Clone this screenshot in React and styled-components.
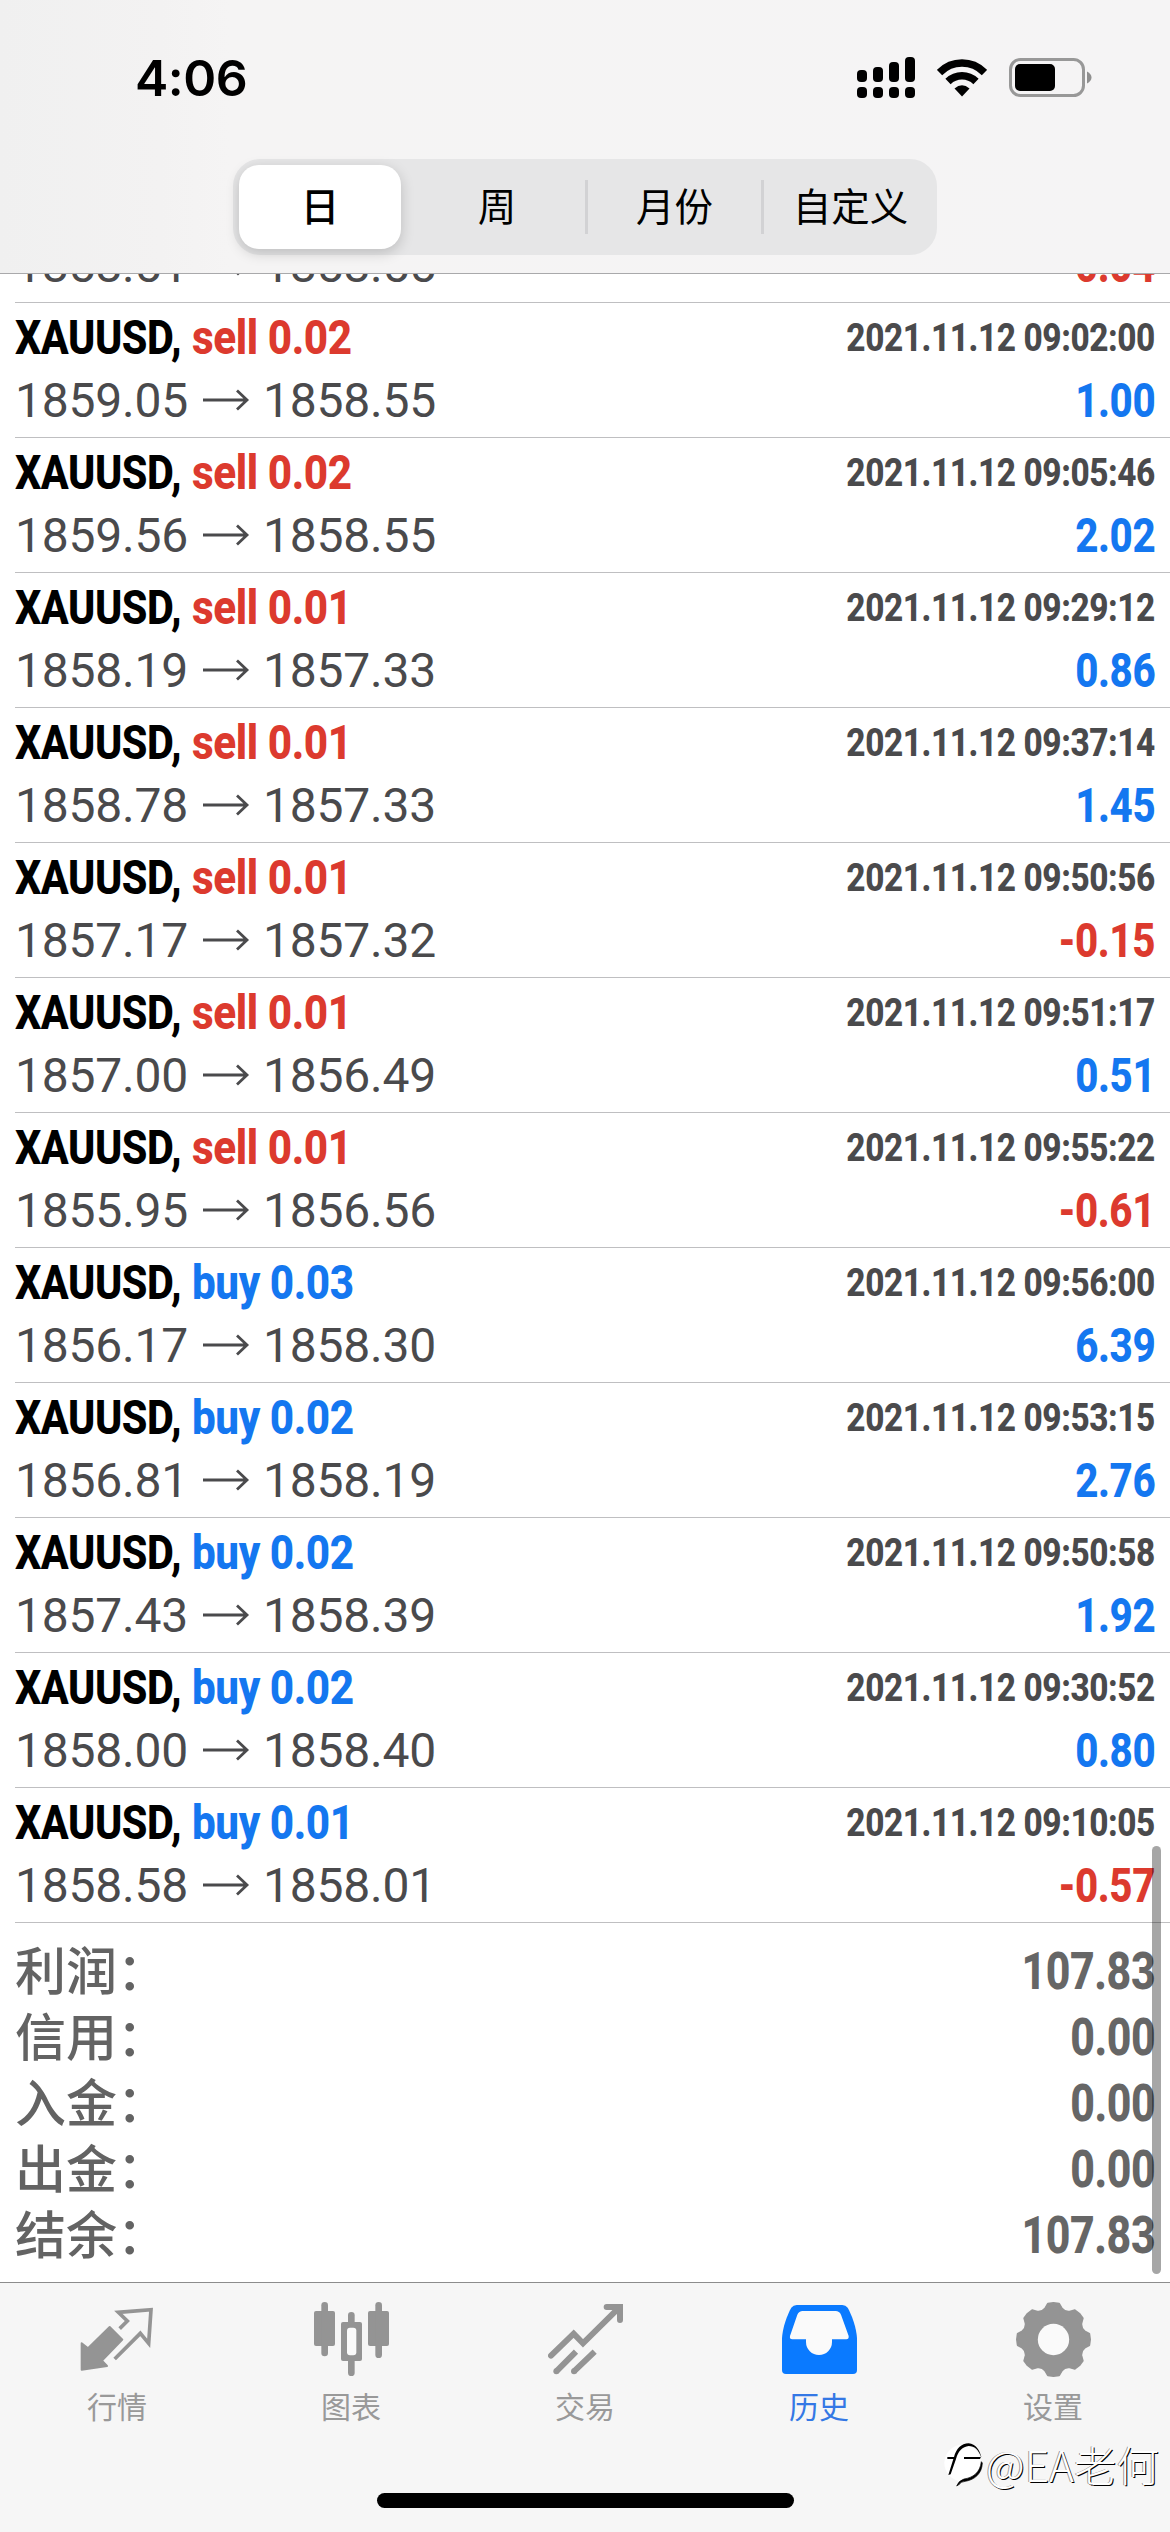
import React from 'react';
import styled, { createGlobalStyle } from 'styled-components';

const GlobalStyle = createGlobalStyle`
  * { box-sizing: border-box; }
  body {
    margin: 0;
    background: #fff;
    font-family: Roboto, "Noto Sans CJK SC", sans-serif;
  }
`;

const Screen = styled.div`
  width: 1170px;
  height: 2532px;
  display: flex;
  flex-direction: column;
  overflow: hidden;
  background: #fff;
`;

const Header = styled.header`
  height: 274px;
  flex: none;
  display: flex;
  flex-direction: column;
  align-items: center;
  background: linear-gradient(90deg, #f0f0f0 0, #f3f2f2 160px, #f5f4f4 230px, #f5f4f5 100%);
  border-bottom: 1px solid #a9a9ab;
`;

const StatusBar = styled.div`
  width: 100%;
  height: 159px;
  padding: 0 78px 4px 135px;
  display: flex;
  align-items: center;
  justify-content: space-between;
`;

const Clock = styled.span`
  font: 600 50px/60px Inter, sans-serif;
  letter-spacing: -0.5px;
  color: #000;
`;

const StatusIcons = styled.div`
  display: flex;
  align-items: center;
  gap: 22px;
  svg { display: block; }
`;

const Segments = styled.div`
  width: 704px;
  height: 96px;
  padding: 6px 0;
  display: flex;
  align-items: center;
  border-radius: 27px;
  background: #e6e6e7;
`;

const Segment = styled.div`
  width: ${({ $active }) => ($active ? 162 : 176)}px;
  height: ${({ $active }) => ($active ? 84 : 54)}px;
  margin: ${({ $active }) => ($active ? '0 8px 0 6px' : '0')};
  padding-bottom: 5px;
  display: flex;
  align-items: center;
  justify-content: center;
  border-radius: ${({ $active }) => ($active ? '20px' : '0')};
  border-left: ${({ $divided }) => ($divided ? '3px solid #d2d2d4' : '0')};
  background: ${({ $active }) => ($active ? '#fff' : 'transparent')};
  box-shadow: ${({ $active }) => ($active ? '0 4px 14px rgba(0, 0, 0, 0.18)' : 'none')};
  font: ${({ $active }) => ($active ? 500 : 400)} 38.5px/49px "Noto Sans CJK SC", sans-serif;
  color: #000;
`;

const List = styled.main`
  position: relative;
  flex: none;
  height: 2008px;
  display: flex;
  flex-direction: column;
  justify-content: flex-end;
  overflow: hidden;
`;

const Deal = styled.div`
  flex: none;
  margin-left: 15px;
  padding: 4px 15px 4px 0;
  border-bottom: 1px solid #bfbfc1;
`;

const Line = styled.div`
  display: flex;
  align-items: center;
  justify-content: space-between;
  height: ${({ $height }) => $height}px;
`;

const Left = styled.div`
  display: flex;
  align-items: center;
`;

// no condensed cut is installed, so the bold one is squeezed
const Condensed = styled.span`
  display: block;
  white-space: nowrap;
  font-weight: 800;
  font-size: ${({ $size }) => $size || 48}px;
  line-height: 60px;
  letter-spacing: -0.5px;
  color: ${({ $color }) => $color};
  transform: scaleX(${({ $squeeze }) => $squeeze});
  transform-origin: ${({ $right }) => ($right ? 'right' : 'left')} center;
`;

const Pair = styled(Condensed)`
  width: 177px;
`;

const Price = styled.span`
  width: 174px;
  font-size: 48px;
  line-height: 60px;
  letter-spacing: -0.2px;
  color: #4a4a4c;
`;

const Arrow = styled.svg`
  display: block;
  width: 48px;
  height: 24px;
  margin: 0 13px 2px;
`;

const Summary = styled.section`
  flex: none;
  padding: 16px 15px 13px;
`;

const Label = styled.span`
  padding-bottom: 8px;
  font: 500 51px/58px "Noto Sans CJK SC", sans-serif;
  color: #636363;
`;

const ScrollThumb = styled.div`
  position: absolute;
  right: 9px;
  bottom: 8px;
  width: 9px;
  height: 428px;
  border-radius: 5px;
  background: rgba(0, 0, 0, 0.35);
`;

const Footer = styled.footer`
  position: relative;
  flex: 1;
  display: flex;
  flex-direction: column;
  align-items: center;
  background: #f6f6f6;
  border-top: 1px solid #8c8c8c;
`;

const Tabs = styled.nav`
  width: 100%;
  height: 210px;
  display: grid;
  grid-template-columns: repeat(5, 1fr);
`;

const Tab = styled.div`
  padding-top: 19px;
  display: flex;
  flex-direction: column;
  align-items: center;
  gap: 8px;
  font: 400 30px/40px "Noto Sans CJK SC", sans-serif;
  color: ${({ $active }) => ($active ? '#3478e5' : '#999')};
  svg { display: block; color: ${({ $active }) => ($active ? '#0a7aff' : '#949494')}; }
`;

const HomeIndicator = styled.div`
  width: 417px;
  height: 15px;
  border-radius: 8px;
  background: #000;
`;

const Watermark = styled.div`
  position: absolute;
  right: 11px;
  bottom: 40px;
  display: flex;
  align-items: center;
  gap: 2px;
  font: 300 42.5px/56px "Noto Sans CJK SC", sans-serif;
  color: #fff;
  text-shadow: 1px 1px 0 #000, -1px 0 0 rgba(0, 0, 0, 0.4);
`;

const RED = '#dc3a2e';
const BLUE = '#1477f0';

const deals = [
  ['sell 0.02', '2021.11.12 09:02:00', '1859.05', '1858.55', '1.00'],
  ['sell 0.02', '2021.11.12 09:05:46', '1859.56', '1858.55', '2.02'],
  ['sell 0.01', '2021.11.12 09:29:12', '1858.19', '1857.33', '0.86'],
  ['sell 0.01', '2021.11.12 09:37:14', '1858.78', '1857.33', '1.45'],
  ['sell 0.01', '2021.11.12 09:50:56', '1857.17', '1857.32', '-0.15'],
  ['sell 0.01', '2021.11.12 09:51:17', '1857.00', '1856.49', '0.51'],
  ['sell 0.01', '2021.11.12 09:55:22', '1855.95', '1856.56', '-0.61'],
  ['buy 0.03', '2021.11.12 09:56:00', '1856.17', '1858.30', '6.39'],
  ['buy 0.02', '2021.11.12 09:53:15', '1856.81', '1858.19', '2.76'],
  ['buy 0.02', '2021.11.12 09:50:58', '1857.43', '1858.39', '1.92'],
  ['buy 0.02', '2021.11.12 09:30:52', '1858.00', '1858.40', '0.80'],
  ['buy 0.01', '2021.11.12 09:10:05', '1858.58', '1858.01', '-0.57'],
];

const totals = [
  ['利润：', '107.83'],
  ['信用：', '0.00'],
  ['入金：', '0.00'],
  ['出金：', '0.00'],
  ['结余：', '107.83'],
];

const gearPath = () => {
  const at = (r, deg) => {
    const a = (deg * Math.PI) / 180;
    return `${(112.5 + r * Math.sin(a)).toFixed(1)} ${(112.5 - r * Math.cos(a)).toFixed(1)}`;
  };
  let d = `M${at(109, -9)}`;
  for (let a = 0; a < 360; a += 45) {
    d += `L${at(110, a)}L${at(109, a + 9)}L${at(97, a + 15)}Q${at(89, a + 22.5)} ${at(97, a + 30)}L${at(109, a + 36)}`;
  }
  return d + 'Z';
};

const TabIcon = ({ children }) => (
  <svg width="75" height="75" viewBox="0 0 225 225" fill="currentColor">{children}</svg>
);

const QuotesIcon = () => (
  <TabIcon>
    <path d="M5 124L24 139L89 75L127 113L66 176L81 192L5 203Z" stroke="currentColor" strokeWidth="6" strokeLinejoin="round" />
    <path d="M119 80L142 57L115 31L213 23L206 124L181 94L104 171" fill="none" stroke="currentColor" strokeWidth="11" />
  </TabIcon>
);

const ChartIcon = () => (
  <TabIcon>
    <rect x="0" y="27" width="63" height="105" rx="6" />
    <rect x="22" y="0" width="20" height="163" rx="10" />
    <rect x="81" y="60" width="63" height="117" rx="6" />
    <rect x="102" y="30" width="20" height="192" rx="10" />
    <rect x="99" y="77" width="28" height="83" rx="9" fill="#fafafa" />
    <rect x="162" y="27" width="63" height="105" rx="6" />
    <rect x="184" y="0" width="20" height="168" rx="10" />
  </TabIcon>
);

const TradeIcon = () => (
  <TabIcon>
    <g fill="none" stroke="currentColor" strokeWidth="18">
      <path d="M9 161L77 95L105 124L214 16" strokeLinecap="round" />
      <path d="M176 15H216V54" strokeLinecap="round" />
      <path d="M84 149L25 208M140 149L78 208" />
    </g>
    <circle cx="25" cy="208" r="9" />
    <circle cx="78" cy="208" r="9" />
  </TabIcon>
);

const HistoryIcon = () => (
  <TabIcon>
    <path d="M0 108C2 75 16 38 28 17Q34 9 44 9H181Q191 9 197 17C209 38 223 75 225 108V204Q225 216 213 216H12Q0 216 0 204Z" />
    <path d="M24 102L46 38Q51 27 62 27H161Q172 27 177 38L200 102Q201 112 193 112H150V120A39 39 0 0 1 72 120V112H31Q22 112 24 102Z" fill="#fafafa" />
  </TabIcon>
);

const SettingsIcon = () => (
  <TabIcon>
    <path d={gearPath()} stroke="currentColor" strokeWidth="5" strokeLinejoin="round" />
    <circle cx="112.500" cy="112.500" r="47" fill="#fafafa" />
  </TabIcon>
);

const tabs = [
  ['行情', QuotesIcon],
  ['图表', ChartIcon],
  ['交易', TradeIcon],
  ['历史', HistoryIcon],
  ['设置', SettingsIcon],
];

const SignalIcon = () => (
  <svg width="58" height="41" viewBox="0 0 58 41">
    {[13, 10, 5, 0].map((top, i) => (
      <g key={top}>
        <rect x={i * 16} y={top} width="10" height={25 - top} rx="4" />
        <rect x={i * 16} y="30" width="10" height="11" rx="4" />
      </g>
    ))}
  </svg>
);

const WifiIcon = () => (
  <svg width="50" height="38" viewBox="0 0 50 38">
    <g fill="none" stroke="#000" strokeWidth="7.600">
      <path d="M2.500 13.500Q12 4 25 4T47.500 13.500" />
      <path d="M11 22.500Q17 16.800 25 16.800T39 22.500" />
    </g>
    <path d="M17.500 29.500Q25 23 32.500 29.500L25 37.500Z" />
  </svg>
);

const BatteryIcon = () => (
  <svg width="83" height="39" viewBox="0 0 83 39">
    <rect x="1.500" y="1.500" width="73" height="36" rx="10" fill="none" stroke="#989898" strokeWidth="3" />
    <rect x="6" y="6" width="40" height="27" rx="5" />
    <path d="M78 13.500Q82.500 16 82.500 19.500T78 25.500Z" fill="#8f8f8f" />
  </svg>
);

// white disc with tapered black strokes
const WatermarkLogo = () => (
  <svg width="42" height="50" viewBox="0 0 126 150">
    <circle cx="62" cy="72" r="55" fill="#fff" />
    <path d="M16 54H36C42 30 58 13 80 13C101 15 113 34 118 54H66V60H114L117 53C109 33 98 21 80 21C62 23 48 36 42 60L26 106L19 108L34 60H16Z" />
    <path d="M118 68C114 102 92 116 66 120Q50 125 44 141L52 136Q56 128 70 127C98 122 120 104 121 72Z" stroke="#000" strokeWidth="2" />
  </svg>
);

const PriceLine = ({ open, close, profit }) => (
  <Line $height={64}>
    <Left>
      <Price>{open}</Price>
      <Arrow viewBox="0 0 48 24" fill="none" stroke="#4a4a4c" strokeWidth="2.8">
        <path d="M1 12H45M35 2.500L45 12L35 21.500" />
      </Arrow>
      <Price>{close}</Price>
    </Left>
    <Condensed $squeeze={0.84} $color={profit[0] === '-' ? RED : BLUE} $right>{profit}</Condensed>
  </Line>
);

const DealRow = ({ deal }) => {
  const [order, time, open, close, profit] = deal;
  return (
    <Deal>
      <Line $height={62}>
        <Left>
          <Pair $squeeze={0.86} $color="#000">XAUUSD,</Pair>
          <Condensed $squeeze={0.88} $color={order.startsWith('buy') ? BLUE : RED}>{order}</Condensed>
        </Left>
        <Condensed $size={39} $squeeze={0.855} $color="#4a4a4c" $right>{time}</Condensed>
      </Line>
      <PriceLine open={open} close={close} profit={profit} />
    </Deal>
  );
};

const App = () => {
  return (
    <Screen>
      <GlobalStyle />
      <Header>
        <StatusBar>
          <Clock>4:06</Clock>
          <StatusIcons>
            <SignalIcon />
            <WifiIcon />
            <BatteryIcon />
          </StatusIcons>
        </StatusBar>
        <Segments>
          <Segment $active>日</Segment>
          <Segment>周</Segment>
          <Segment $divided>月份</Segment>
          <Segment $divided>自定义</Segment>
        </Segments>
      </Header>
      <List>
        {/* tail of the row scrolled under the header */}
        <Deal>
          <PriceLine open="1858.51" close="1858.55" profit="-0.04" />
        </Deal>
        {deals.map((deal) => (
          <DealRow key={deal[1]} deal={deal} />
        ))}
        <Summary>
          {totals.map(([label, value]) => (
            <Line key={label} $height={66}>
              <Label>{label}</Label>
              <Condensed $size={51} $squeeze={0.84} $color="#666" $right>{value}</Condensed>
            </Line>
          ))}
        </Summary>
        <ScrollThumb />
      </List>
      <Footer>
        <Tabs>
          {tabs.map(([name, Icon]) => (
            <Tab key={name} $active={name === '历史'}>
              <Icon />
              {name}
            </Tab>
          ))}
        </Tabs>
        <HomeIndicator />
        <Watermark>
          <WatermarkLogo />
          @EA老何
        </Watermark>
      </Footer>
    </Screen>
  );
};

export default App;
